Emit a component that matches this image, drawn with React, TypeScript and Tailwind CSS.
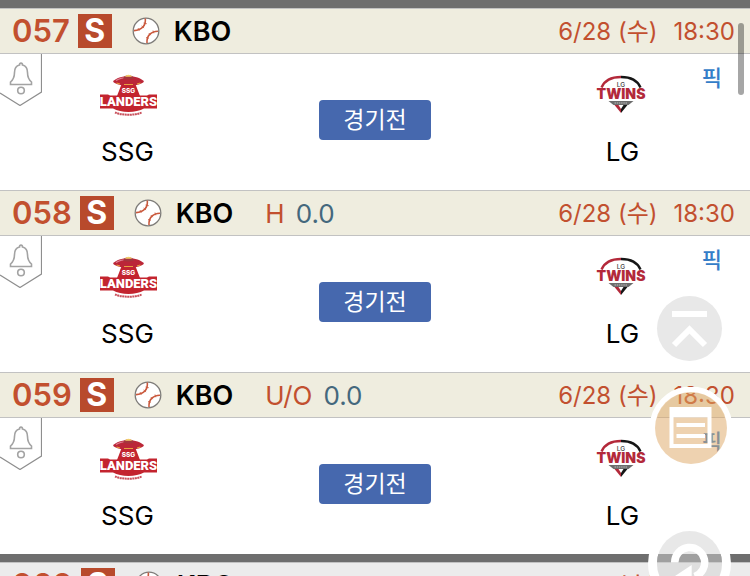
type Game = {
  id: string
  league: string
  betType?: string
  line?: string
  date: string
  time: string
  home: string
  away: string
}

const games: Game[] = [
  { id: "057", league: "KBO", date: "6/28 (수)", time: "18:30", home: "SSG", away: "LG" },
  { id: "058", league: "KBO", betType: "H", line: "0.0", date: "6/28 (수)", time: "18:30", home: "SSG", away: "LG" },
  { id: "059", league: "KBO", betType: "U/O", line: "0.0", date: "6/28 (수)", time: "18:30", home: "SSG", away: "LG" },
]

const nextGame: Game = {
  id: "060",
  league: "KBO",
  date: "6/28 (수)",
  time: "18:30",
  home: "SSG",
  away: "LG",
}

function Baseball() {
  return (
    <svg viewBox="0 0 28 28" className="h-7 w-7 shrink-0" fill="none">
      <circle cx="14" cy="14" r="12.8" fill="#fff" stroke="#7d7b78" strokeWidth="1.3" />
      <path d="M13.300 1.500C14 8.500 10 13.300 2 13.600" stroke="#c9583c" strokeWidth="1.600" />
      <path d="M26 14.300C19 14.500 14.500 18.500 15 26" stroke="#c9583c" strokeWidth="1.600" />
      <path
        d="M11.500 6l3.300.7M9.500 9l2.600 2M6 11l1.300 2.600M21 13.500l.8 2.800M16.800 16l1.800 2.200M14 20.500l2.800.8"
        stroke="#c9583c"
        strokeWidth=".8"
      />
    </svg>
  )
}

function LandersLogo() {
  return (
    <svg viewBox="0 0 64 48" className="h-12 w-16" role="img" aria-label="SSG Landers">
      <path d="M26 13h13l5 13H21z" fill="#c3242f" />
      <path d="M17 11.800c3-4 9-5.500 15.500-5.500S45 7.800 48 11.800c-3 2.800-9 4-15.500 4S20 14.600 17 11.800z" fill="#bb2638" />
      <path d="M20 10.500c4-2.500 8-3 12-3" stroke="#de8294" strokeWidth="1.200" fill="none" />
      <path d="M27 8.500c1-4.500 10-4.500 11 0-3 1.400-8 1.400-11 0z" fill="#a4353d" />
      <path d="M29 6.800c1-2.800 6-2.800 7 0z" fill="#f3cf6b" />
      <path d="M20.500 13l3.500 1M28 14.500h9M41 14l3.500-1" stroke="#e9a13f" strokeWidth="1.200" fill="none" />
      <path d="M4 24.500h8l2 1h37l2-1h8V38.500H48c-8 4.500-23 4.500-31 0H4z" fill="#c3242f" />
      <text x="32.500" y="22.800" textAnchor="middle" fontSize="6.500" fontWeight="800" fill="#fff" fontFamily="Inter, sans-serif">
        SSG
      </text>
      <text x="32.500" y="36" textAnchor="middle" fontSize="13" fontWeight="900" fill="#fff" fontFamily="Roboto, sans-serif">
        LANDERS
      </text>
      <path d="M19 42.500c7 3 20 3 27 0" stroke="#c9515c" strokeWidth="2" strokeDasharray="2 .5" fill="none" />
    </svg>
  )
}

function TwinsLogo() {
  return (
    <svg viewBox="0 0 64 48" className="h-12 w-16" role="img" aria-label="LG Twins">
      <path d="M10.500 17.500C13.500 10.500 21 7 30 7" stroke="#b3293a" strokeWidth="2.400" fill="none" />
      <path d="M30 7C39 7 46.500 10.500 49.500 17.500" stroke="#161616" strokeWidth="2.400" fill="none" />
      <text x="30" y="17" textAnchor="middle" fontSize="6.500" fontWeight="500" fill="#444" fontFamily="Inter, sans-serif">
        LG
      </text>
      <text x="30" y="29" textAnchor="middle" fontSize="14" fontWeight="900" fill="#b3293a" fontFamily="Inter, sans-serif">
        TWINS
      </text>
      <path d="M17.500 31h25l-5 4h-15z" fill="#6c6c6c" />
      <path d="M23.500 33h13" stroke="#bdbdbd" strokeWidth="1" strokeDasharray="1.500 .7" />
      <path d="M23.500 35h4l2.500 4v4z" fill="#b3293a" />
      <path d="M36.500 35h-4L30 39v4z" fill="#161616" />
    </svg>
  )
}

function GameHeader({ game, muted }: { game: Game; muted?: boolean }) {
  return (
    <header
      className={
        muted
          ? "flex h-[46px] items-center border-y border-[#c2c2c2] bg-[#ececec] pr-[15px] pl-3"
          : "flex h-[46px] items-center border-y border-[#c2c2c2] bg-[#efeddf] pr-[15px] pl-3"
      }
    >
      <span className="text-[31px] leading-8 font-semibold text-[#c2502f]">{game.id}</span>
      <span className="ml-2 flex h-[34px] w-[34px] items-center justify-center bg-[#b84a2c] text-[32px] leading-8 font-bold text-white">
        S
      </span>
      <span className="ml-5">
        <Baseball />
      </span>
      <h2 className="ml-3.5 pt-0.5 text-[27px] leading-8 font-semibold text-black">{game.league}</h2>
      {game.betType && (
        <p className="ml-8 flex gap-[11px] pt-0.5 text-[26px] leading-8">
          <span className="text-[#c2502f]">{game.betType}</span>
          <span className="text-[#44687d]">{game.line}</span>
        </p>
      )}
      <p className="ml-auto flex gap-4 pt-0.5 text-2xl text-[#c2502f]">
        <span>{game.date}</span>
        <time>{game.time}</time>
      </p>
    </header>
  )
}

function GameRow({ game }: { game: Game }) {
  return (
    <article>
      <GameHeader game={game} />
      <div className="relative grid h-[136px] grid-cols-[34%_1fr_34%] bg-white">
        <button aria-label="알림 설정" className="absolute top-0 left-0">
          <svg viewBox="0 0 42 52" className="h-[52px] w-[42px]" fill="none" stroke="#8e8e8e">
            <path d="M41.500 0v38L20 51.500 0 39" strokeWidth="1.200" />
            <path
              d="M10.500 30.500v-2.500c3-2.500 4-4.500 4-9.500 0-4 2-6.800 5-7.500 0-2.500 3-2.500 3 0 3 .7 5 3.500 5 7.500 0 5 1 7 4 9.500v2.500z"
              strokeWidth="1.600"
              stroke="#a3a3a3"
            />
            <circle cx="21" cy="36.500" r="3.300" strokeWidth="1.600" stroke="#a3a3a3" />
          </svg>
        </button>
        <div className="flex flex-col items-center pt-4">
          <LandersLogo />
          <p className="mt-[18px] text-[26px] leading-8">{game.home}</p>
        </div>
        <div className="flex items-center justify-center pb-1">
          <button className="h-10 w-28 rounded bg-[#4668ae] text-[23px] text-white">경기전</button>
        </div>
        <div className="flex flex-col items-center pt-4">
          <TwinsLogo />
          <p className="mt-[18px] text-[26px] leading-8">{game.away}</p>
        </div>
        <a href="#pick" className="absolute top-2 right-7 text-[22px] leading-8 font-medium text-[#347dc8]">
          픽
        </a>
      </div>
    </article>
  )
}

function FloatingMenu() {
  return (
    <nav className="absolute top-[287px] right-[18px] flex flex-col">
      <button aria-label="맨 위로">
        <svg viewBox="0 0 84 84" className="h-[84px] w-[84px]" fill="none">
          <circle cx="41.500" cy="41.500" r="32.500" fill="#e8e8e8" />
          <path d="M24 27h35M26 58l15.500-15.500L57 58" stroke="#fff" strokeWidth="6" />
        </svg>
      </button>
      <button aria-label="목록" className="mt-4">
        <svg viewBox="0 0 84 84" className="h-[84px] w-[84px]" fill="none">
          <circle cx="43" cy="41" r="38.500" stroke="#fff" strokeWidth="6" />
          <circle cx="43" cy="41" r="36" fill="#dea562" fillOpacity=".5" />
          <path d="M21.500 20h42v41h-42zM25.500 30.500v26.500h34V30.500z" fill="#fff" fillRule="evenodd" />
          <path d="M28.500 38h28.500M28.500 49h28.500" stroke="#fff" strokeWidth="4" />
        </svg>
      </button>
      <button aria-label="새로고침" className="mt-[51px]">
        <svg viewBox="0 0 84 84" className="h-[84px] w-[84px]" fill="none">
          <circle cx="41.500" cy="41.500" r="37" stroke="#fff" strokeWidth="9" />
          <circle cx="41.500" cy="41.500" r="32.500" fill="#d2d2d2" fillOpacity=".5" />
          <path d="M26.700 40.500a15 15 0 1 1 20 14.100" stroke="#fff" strokeWidth="7.500" />
          <path d="M43.700 43v22L27 54z" fill="#fff" />
        </svg>
      </button>
    </nav>
  )
}

export default function App() {
  return (
    <main className="relative h-screen overflow-hidden bg-white font-['Inter','Noto_Sans_CJK_KR',sans-serif] text-black">
      <div className="h-2 bg-[#6e6e6e]" />
      {games.map((game) => (
        <GameRow key={game.id} game={game} />
      ))}
      <div className="h-2 bg-[#6e6e6e]" />
      <GameHeader game={nextGame} muted />
      <FloatingMenu />
      {/* 스크롤바 */}
      <div className="absolute top-[23px] right-[6px] h-[72px] w-[6px] rounded-full bg-black/35" />
    </main>
  )
}
